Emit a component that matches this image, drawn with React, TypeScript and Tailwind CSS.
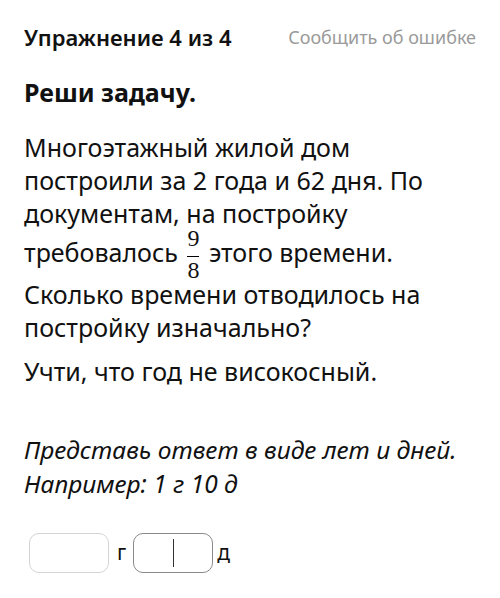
import React from 'react';

function Fraction({ top, bottom }: { top: string; bottom: string }) {
  return (
    <span
      className="inline-flex flex-col items-center align-[16px] -mt-[4px] -mb-[4px] mx-[3px] leading-none"
      style={{ fontFamily: '"Liberation Serif", serif' }}
    >
      <span className="text-[24px] pb-[6px]">{top}</span>
      <span className="w-[12px] border-t border-black" />
      <span className="text-[24px] pt-[1px]">{bottom}</span>
    </span>
  );
}

export default function App() {
  return (
    <div className="w-[500px] h-[598px] bg-white text-[#111] px-6 pt-[21px]" style={{ fontFamily: '"Noto Sans", sans-serif' }}>
      <div className="flex items-center justify-between">
        <h2 className="text-[22px] font-semibold">Упражнение 4 из 4</h2>
        <span className="text-[18px] text-[#9a9a9a]">Сообщить об ошибке</span>
      </div>

      <h1 className="mt-[20px] text-[25px] font-bold">Реши задачу.</h1>

      <p className="mt-[19px] text-[25px] leading-[33px]">
        Многоэтажный жилой дом построили за 2 года и 62 дня. По документам, на постройку требовалось{' '}
        <Fraction top="9" bottom="8" /> этого времени. Сколько времени отводилось на постройку изначально?
      </p>

      <p className="mt-[11px] text-[25px] leading-[33px]">Учти, что год не високосный.</p>

      <p className="mt-[45px] text-[24.5px] leading-[34px] italic">
        Представь ответ в виде лет и дней.
        <br />
        Например: 1 г 10 д
      </p>

      <div className="mt-[32px] flex items-center pl-[5px]">
        <div className="w-[80px] h-[40px] rounded-[10px] border border-[#d4d4d4]" />
        <span className="text-[21px] ml-[8px] mr-[7px]">г</span>
        <div className="w-[80px] h-[40px] rounded-[10px] border border-[#8a8a8a] flex items-center justify-center">
          <span className="w-[1px] h-[28px] bg-[#333]" />
        </div>
        <span className="text-[21px] ml-[4px]">д</span>
      </div>
    </div>
  );
}
